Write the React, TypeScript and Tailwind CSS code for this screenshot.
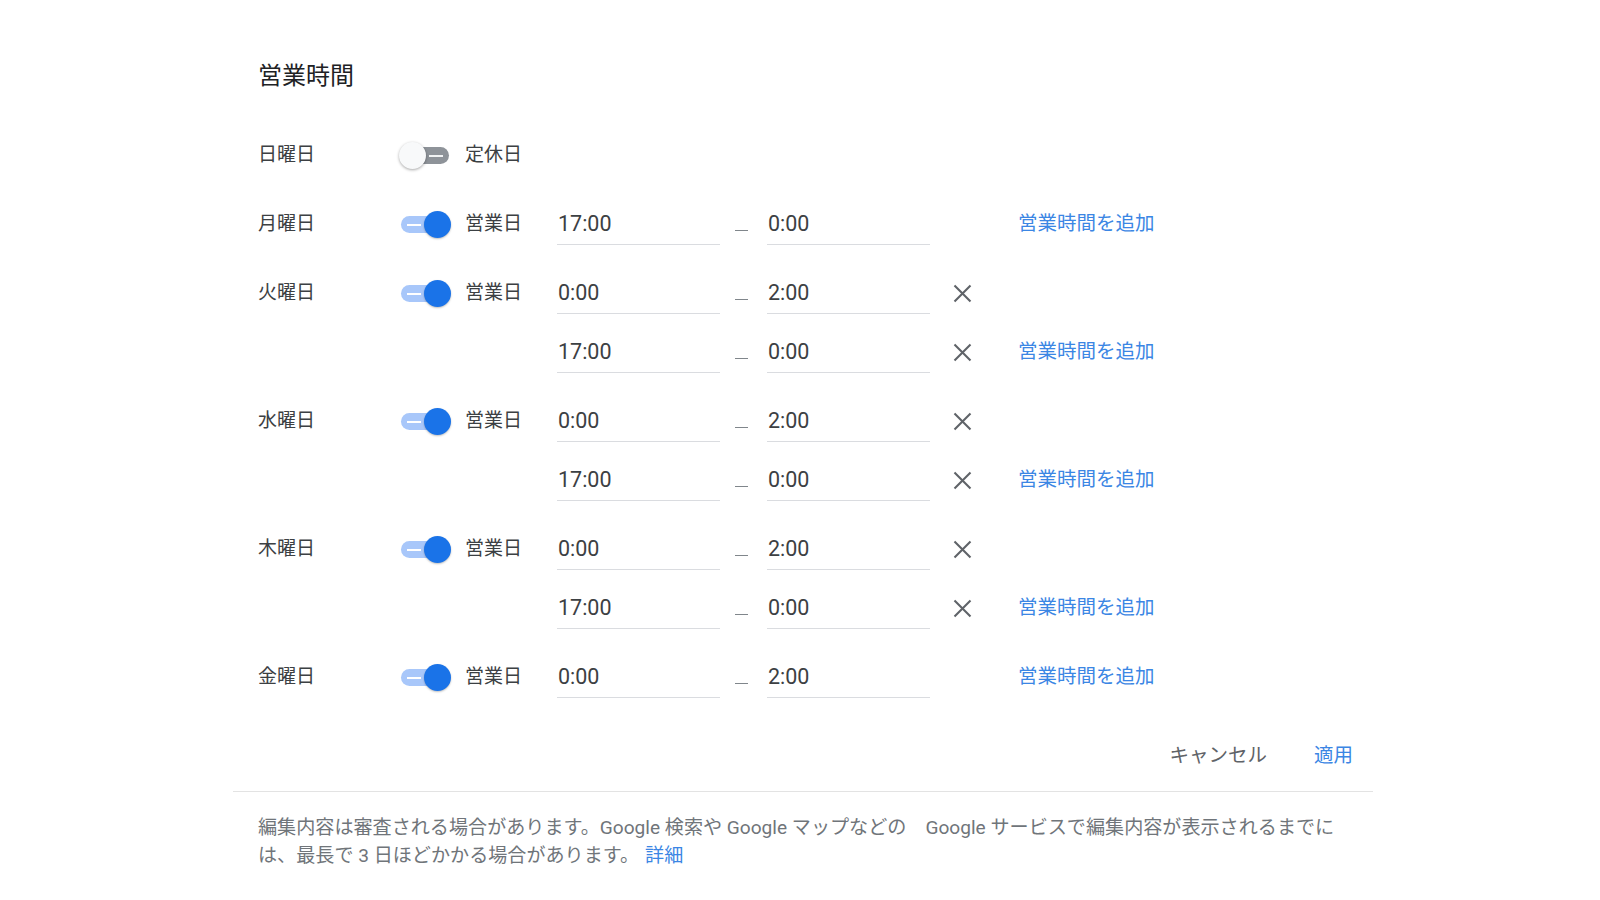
import React from "react";

type Slot = { from: string; to: string };
type Day = { name: string; open: boolean; slots: Slot[] };

const days: Day[] = [
  { name: "日曜日", open: false, slots: [] },
  { name: "月曜日", open: true, slots: [{ from: "17:00", to: "0:00" }] },
  { name: "火曜日", open: true, slots: [{ from: "0:00", to: "2:00" }, { from: "17:00", to: "0:00" }] },
  { name: "水曜日", open: true, slots: [{ from: "0:00", to: "2:00" }, { from: "17:00", to: "0:00" }] },
  { name: "木曜日", open: true, slots: [{ from: "0:00", to: "2:00" }, { from: "17:00", to: "0:00" }] },
  { name: "金曜日", open: true, slots: [{ from: "0:00", to: "2:00" }] },
];

const font = { fontFamily: '"Roboto", "Noto Sans CJK JP", sans-serif' };

function Toggle({ on }: { on: boolean }) {
  return (
    <div className="relative w-[52px] h-[27px] shrink-0">
      <div
        className={
          "absolute left-[2px] right-[2px] top-[5px] h-[17px] rounded-full " +
          (on ? "bg-[#a8c7fa]" : "bg-[#8e9399]")
        }
      />
      {on ? (
        <div className="absolute left-[8px] top-[13px] w-[14px] h-[1.5px] bg-white" />
      ) : (
        <div className="absolute left-[30px] top-[13px] w-[14px] h-[1.5px] bg-[#f1f3f4]" />
      )}
      {on ? (
        <div className="absolute right-0 top-0 w-[27px] h-[27px] rounded-full bg-[#1a73e8] shadow-[0_1px_2px_rgba(0,0,0,0.25)]" />
      ) : (
        <div className="absolute left-0 top-0 w-[27px] h-[27px] rounded-full bg-[#f8f9fa] shadow-[0_1px_3px_rgba(0,0,0,0.35)]" />
      )}
    </div>
  );
}

function XIcon() {
  return (
    <svg width="19" height="19" viewBox="0 0 19 19" className="shrink-0">
      <path d="M1.5 1.5 L17.5 17.5 M17.5 1.5 L1.5 17.5" stroke="#5f6368" strokeWidth="2.1" strokeLinecap="butt" />
    </svg>
  );
}

function TimeField({ value }: { value: string }) {
  return (
    <div className="w-[163px] h-[40px] border-b border-[#dadce0] flex items-center pl-[1px] text-[21.5px] text-[#3c4043] shrink-0">
      {value}
    </div>
  );
}

function Row({ day, slot, index }: { day: Day; slot?: Slot; index: number }) {
  const first = index === 0;
  const last = !day.open || index === day.slots.length - 1;
  const showX = day.slots.length > 1;
  return (
    <div className="flex items-center h-[59px]">
      <div className="w-[141px] shrink-0 text-[19px] text-[#3c4043]">{first ? day.name : ""}</div>
      <div className="w-[66px] shrink-0 flex items-center">{first ? <Toggle on={day.open} /> : null}</div>
      <div className="w-[92px] shrink-0 text-[19px] text-[#3c4043]">
        {first ? (day.open ? "営業日" : "定休日") : ""}
      </div>
      {slot ? (
        <>
          <TimeField value={slot.from} />
          <div className="w-[47px] shrink-0 flex">
            <div className="ml-[15px] mt-[12px] w-[13px] h-[1.5px] bg-[#80868b]" />
          </div>
          <TimeField value={slot.to} />
          <div className="w-[88px] shrink-0 flex items-center">
            {showX ? (
              <div className="ml-[23px] flex">
                <XIcon />
              </div>
            ) : null}
          </div>
          {last ? (
            <div className="text-[19.5px] text-[#3b86e4] whitespace-nowrap -mt-[2px]">営業時間を追加</div>
          ) : null}
        </>
      ) : null}
    </div>
  );
}

export default function App() {
  return (
    <div className="w-full min-h-[900px] bg-white" style={font}>
      <div className="ml-[233px] w-[1140px]">
        <div className="px-[25px] pt-[62px]">
          <div className="h-[28px] leading-[28px] text-[24px] text-[#202124]">営業時間</div>
          <div className="mt-[36px] flex flex-col gap-[10px]">
            {days.map((d) => (
              <div key={d.name} className="flex flex-col">
                {d.open ? (
                  d.slots.map((s, i) => <Row key={i} day={d} slot={s} index={i} />)
                ) : (
                  <Row day={d} index={0} />
                )}
              </div>
            ))}
          </div>
          <div className="mt-[35px] h-[28px] flex items-center justify-end mr-[-5px] gap-[47px] text-[19.5px]">
            <span className="text-[#5f6368]">キャンセル</span>
            <span className="text-[#3b86e4]">適用</span>
          </div>
        </div>
        <div className="mt-[21px] h-px bg-[#e3e3e3]" />
        <div className="px-[25px] mt-[22px] text-[19.1px] leading-[28px] text-[#70757a] whitespace-nowrap">
          編集内容は審査される場合があります。Google 検索や Google マップなどの　Google サービスで編集内容が表示されるまでに
          <br />
          は、最長で 3 日ほどかかる場合があります。<span className="ml-[6px] text-[#3b86e4]">詳細</span>
        </div>
      </div>
    </div>
  );
}
